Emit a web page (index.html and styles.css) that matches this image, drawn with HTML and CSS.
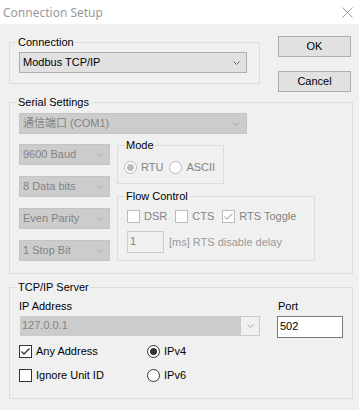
FILE: index.html
```html
<!DOCTYPE html>
<html lang="en">
<head>
  <meta charset="UTF-8" />
  <title>Connection Setup</title>
  <meta name="viewport" content="width=device-width, initial-scale=1.0">
  <link rel="stylesheet" href="styles.css">
</head>
<body>

  <div class="titlebar">
    <span class="title">Connection Setup</span>
    <svg class="close" width="11" height="11" viewBox="0 0 11 11"><path d="M0.5 0.5L10.5 10.5M10.5 0.5L0.5 10.5" /></svg>
  </div>

  <div class="dialog">
    <div class="top-row">
      <fieldset class="group conn">
        <legend>Connection</legend>
        <div class="combo conn-combo">
          <span>Modbus TCP/IP</span>
          <svg class="chev" width="7" height="4" viewBox="0 0 7 4"><path d="M0.5 0.5L3.5 3.5L6.5 0.5" /></svg>
        </div>
      </fieldset>
      <div class="buttons">
        <button class="btn">OK</button>
        <button class="btn">Cancel</button>
      </div>
    </div>

    <fieldset class="group serial">
      <legend>Serial Settings</legend>
      <div class="combo off port">
        <span>通信端口 (COM1)</span>
        <svg class="chev" width="7" height="4" viewBox="0 0 7 4"><path d="M0.5 0.5L3.5 3.5L6.5 0.5" /></svg>
      </div>
      <div class="serial-body">
        <div class="serial-left">
          <div class="combo off small"><span>9600 Baud</span><svg class="chev" width="7" height="4" viewBox="0 0 7 4"><path d="M0.5 0.5L3.5 3.5L6.5 0.5" /></svg></div>
          <div class="combo off small"><span>8 Data bits</span><svg class="chev" width="7" height="4" viewBox="0 0 7 4"><path d="M0.5 0.5L3.5 3.5L6.5 0.5" /></svg></div>
          <div class="combo off small"><span>Even Parity</span><svg class="chev" width="7" height="4" viewBox="0 0 7 4"><path d="M0.5 0.5L3.5 3.5L6.5 0.5" /></svg></div>
          <div class="combo off small"><span>1 Stop Bit</span><svg class="chev" width="7" height="4" viewBox="0 0 7 4"><path d="M0.5 0.5L3.5 3.5L6.5 0.5" /></svg></div>
        </div>
        <div class="serial-right">
          <fieldset class="group mode">
            <legend>Mode</legend>
            <div class="opts">
              <label class="opt off"><span class="radio on"></span>RTU</label>
              <label class="opt off"><span class="radio"></span>ASCII</label>
            </div>
          </fieldset>
          <fieldset class="group flow">
            <legend>Flow Control</legend>
            <div class="opts">
              <label class="opt off"><span class="check"></span>DSR</label>
              <label class="opt off"><span class="check"></span>CTS</label>
              <label class="opt off"><span class="check"><svg width="11" height="11" viewBox="0 0 11 11"><path d="M1.5 5.5L4 8L9.5 2.5" /></svg></span>RTS Toggle</label>
            </div>
            <div class="delay">
              <div class="textbox off">1</div>
              <span class="delay-text">[ms] RTS disable delay</span>
            </div>
          </fieldset>
        </div>
      </div>
    </fieldset>

    <fieldset class="group tcp">
      <legend>TCP/IP Server</legend>
      <div class="tcp-top">
        <div class="ip-col">
          <div class="field-label">IP Address</div>
          <div class="ip-combo">
            <span class="ip-edit">127.0.0.1</span>
            <span class="ip-drop"><svg class="chev" width="7" height="4" viewBox="0 0 7 4"><path d="M0.5 0.5L3.5 3.5L6.5 0.5" /></svg></span>
          </div>
        </div>
        <div class="port-col">
          <div class="field-label">Port</div>
          <div class="textbox port-box">502</div>
        </div>
      </div>
      <div class="tcp-opts">
        <label class="opt"><span class="check"><svg width="11" height="11" viewBox="0 0 11 11"><path d="M1.5 5.5L4 8L9.5 2.5" /></svg></span>Any Address</label>
        <label class="opt"><span class="radio on"></span>IPv4</label>
        <label class="opt"><span class="check"></span>Ignore Unit ID</label>
        <label class="opt"><span class="radio"></span>IPv6</label>
      </div>
    </fieldset>
  </div>

</body>
</html>
```

FILE: styles.css
```css
* {
  box-sizing: border-box;
}

body {
  margin: 0;
  background: #f0f0f0;
  font-family: "Liberation Sans", "Noto Sans CJK SC", sans-serif;
  font-size: 11px;
  line-height: 13px;
  color: #000;
}

.titlebar {
  height: 24px;
  background: #fff;
  display: flex;
  align-items: center;
  justify-content: space-between;
  padding: 0 6px 0 3px;
}

.title {
  font-family: "Noto Sans", sans-serif;
  font-size: 12px;
  color: #999;
}

.close path {
  stroke: #999;
  stroke-width: 1;
  fill: none;
}

.dialog {
  padding: 12px 0 0 9px;
}

/* buttons hang down past the connection box */
.top-row {
  display: flex;
  align-items: flex-start;
  gap: 18px;
  height: 48px;
}

/* group boxes */
.group {
  margin: 0;
  min-width: 0;
  border: 1px solid #dcdcdc;
  padding: 0 9px;
}

.group legend {
  padding: 0 1px;
  margin-left: -2px;
}

.conn {
  width: 251px;
  padding: 3px 12px 10px 9px;
}

.buttons {
  display: flex;
  flex-direction: column;
  gap: 14px;
}

.btn {
  width: 73px;
  height: 21px;
  border: 1px solid #adadad;
  background: #e1e1e1;
  font: inherit;
  color: #000;
  padding: 0;
}

/* combo boxes */
.combo {
  height: 21px;
  display: flex;
  align-items: center;
  justify-content: space-between;
  border: 1px solid #adadad;
  background: #e1e1e1;
  padding: 0 6px 0 3px;
}

.chev path {
  fill: none;
  stroke: #606060;
  stroke-width: 1;
}

.combo.off {
  background: #cccccc;
  border-color: #c4c4c4;
  color: #838383;
}

.combo.off .chev path,
.ip-drop .chev path {
  stroke: #a8a8a8;
}

.serial {
  width: 344px;
  margin-top: 12px;
  padding: 4px 9px 12px 9px;
}

.port {
  width: 228px;
}

.serial-body {
  display: flex;
  align-items: flex-start;
  gap: 7px;
  margin-top: 5px;
}

.serial-left {
  width: 91px;
  display: flex;
  flex-direction: column;
  gap: 11px;
  padding-top: 5px;
}

.serial-right {
  display: flex;
  flex-direction: column;
  gap: 6px;
}

.mode {
  width: 107px;
  padding: 9px 6px 9px 6px;
}

.mode legend {
  margin-left: 1px;
}

.flow {
  width: 198px;
  padding: 7px 9px 7px 9px;
}

/* radios and checkboxes */
.opts {
  display: flex;
  gap: 8px;
}

.mode .opts {
  gap: 6px;
}

.opt {
  display: inline-flex;
  align-items: center;
  gap: 4px;
  height: 13px;
}

.opt.off {
  color: #838383;
}

.radio,
.check {
  width: 13px;
  height: 13px;
  border: 1px solid #333;
  background: #fff;
  flex: none;
  display: flex;
  align-items: center;
  justify-content: center;
}

.radio {
  border-radius: 50%;
}

.radio.on::after {
  content: "";
  width: 7px;
  height: 7px;
  border-radius: 50%;
  background: #333;
}

.check path {
  fill: none;
  stroke: #333;
  stroke-width: 1.3;
}

.opt.off .radio,
.opt.off .check {
  border-color: #bcbcbc;
}

.opt.off .radio.on::after {
  background: #bcbcbc;
}

.opt.off .check path {
  stroke: #bcbcbc;
}

.delay {
  display: flex;
  align-items: center;
  gap: 5px;
  margin-top: 8px;
}

.textbox {
  height: 22px;
  border: 1px solid #7a7a7a;
  background: #fff;
  padding: 3px 2px;
}

.textbox.off {
  width: 37px;
  border-color: #cccccc;
  background: #f0f0f0;
  color: #838383;
}

.delay-text {
  color: #9a9a9a;
}

/* TCP/IP */
.tcp {
  width: 344px;
  margin-top: 7px;
  padding: 6px 9px 16px 9px;
}

.tcp-top {
  display: flex;
  align-items: flex-start;
}

.field-label {
  margin-bottom: 3px;
}

.ip-combo {
  width: 240px;
  height: 20px;
  margin-left: 1px;
  display: flex;
  border: 1px solid #cccccc;
  background: #f0f0f0;
}

.ip-edit {
  flex: 1;
  background: #cccccc;
  color: #838383;
  padding: 2px 1px;
}

.ip-drop {
  width: 18px;
  display: flex;
  align-items: center;
  justify-content: center;
}

.port-col {
  margin-left: 17px;
}

.port-col .field-label {
  padding-left: 1px;
}

.port-box {
  width: 66px;
}

.tcp-opts {
  display: grid;
  grid-template-columns: 128px auto;
  row-gap: 11px;
  margin-top: 7px;
}
```
